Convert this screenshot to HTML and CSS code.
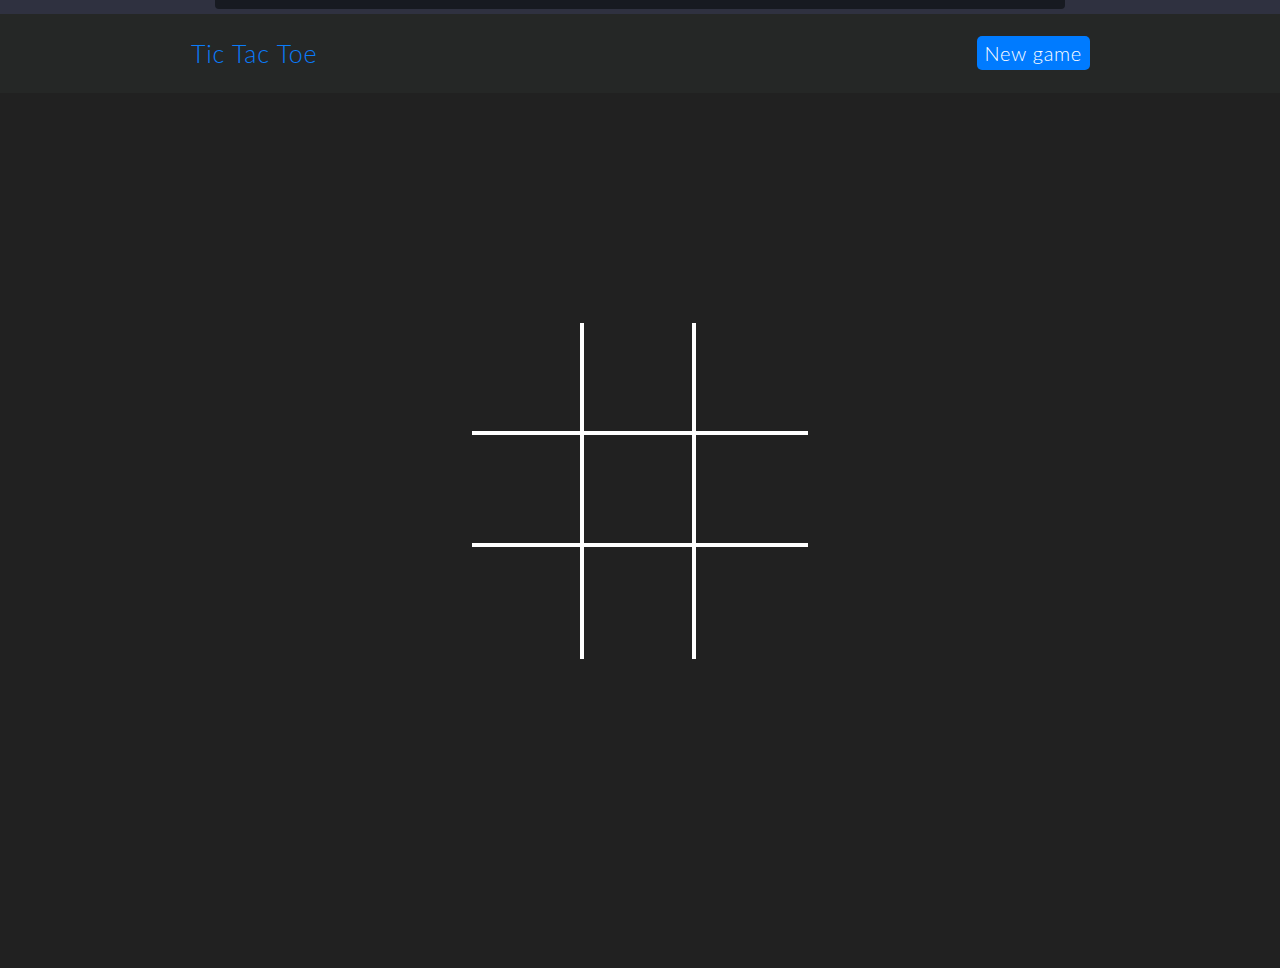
FILE: index.html
```html
<!DOCTYPE html>
<html lang="en">
<head>
<meta charset="utf-8">
<title>Tic Tac Toe</title>
<link rel="stylesheet" href="styles.css">
</head>
<body>
<div class="chrome">
  <div class="chrome-bar"></div>
</div>
<header class="navbar">
  <div class="nav-inner">
    <a class="brand" href="#">Tic Tac Toe</a>
    <button class="btn-new" type="button">New game</button>
  </div>
</header>
<main class="main">
  <div class="board">
    <div class="cell"></div>
    <div class="cell"></div>
    <div class="cell last-col"></div>
    <div class="cell"></div>
    <div class="cell"></div>
    <div class="cell last-col"></div>
    <div class="cell last-row"></div>
    <div class="cell last-row"></div>
    <div class="cell last-row last-col"></div>
  </div>
</main>
</body>
</html>
```
FILE: styles.css
```css
* { box-sizing: border-box; }
html, body {
  margin: 0;
  padding: 0;
  height: 100%;
  background: #212121;
  font-family: "Lato", "Noto Sans", sans-serif;
  font-weight: 300;
}
.chrome {
  height: 14px;
  background: #2f3140;
  display: flex;
  padding-left: 215px;
}
.chrome-bar {
  width: 850px;
  height: 9px;
  background: #171a21;
  border-radius: 0 0 4px 4px;
}
.navbar {
  height: 79px;
  background: #252726;
  display: flex;
  align-items: center;
}
.nav-inner {
  width: 900px;
  margin: 0 auto;
  display: flex;
  justify-content: space-between;
  align-items: center;
}
.brand {
  color: #0a7bfa;
  text-decoration: none;
  font-size: 25px;
  font-weight: 300;
  letter-spacing: 0.8px;
  padding-left: 1px;
  margin-bottom: 2px;
}
.btn-new {
  background: #007bff;
  color: #fff;
  border: none;
  border-radius: 5px;
  height: 34px;
  padding: 0 8px;
  margin-bottom: 1px;
  font-family: inherit;
  font-size: 20px;
  font-weight: 300;
  letter-spacing: 0.7px;
}
.main {
  display: flex;
  justify-content: center;
  padding-top: 230px;
}
.board {
  display: grid;
  grid-template-columns: repeat(3, 112px);
  grid-template-rows: repeat(3, 112px);
}
.cell {
  border-right: 4px solid #fff;
  border-bottom: 4px solid #fff;
}
.cell.last-col { border-right: none; }
.cell.last-row { border-bottom: none; }
```
